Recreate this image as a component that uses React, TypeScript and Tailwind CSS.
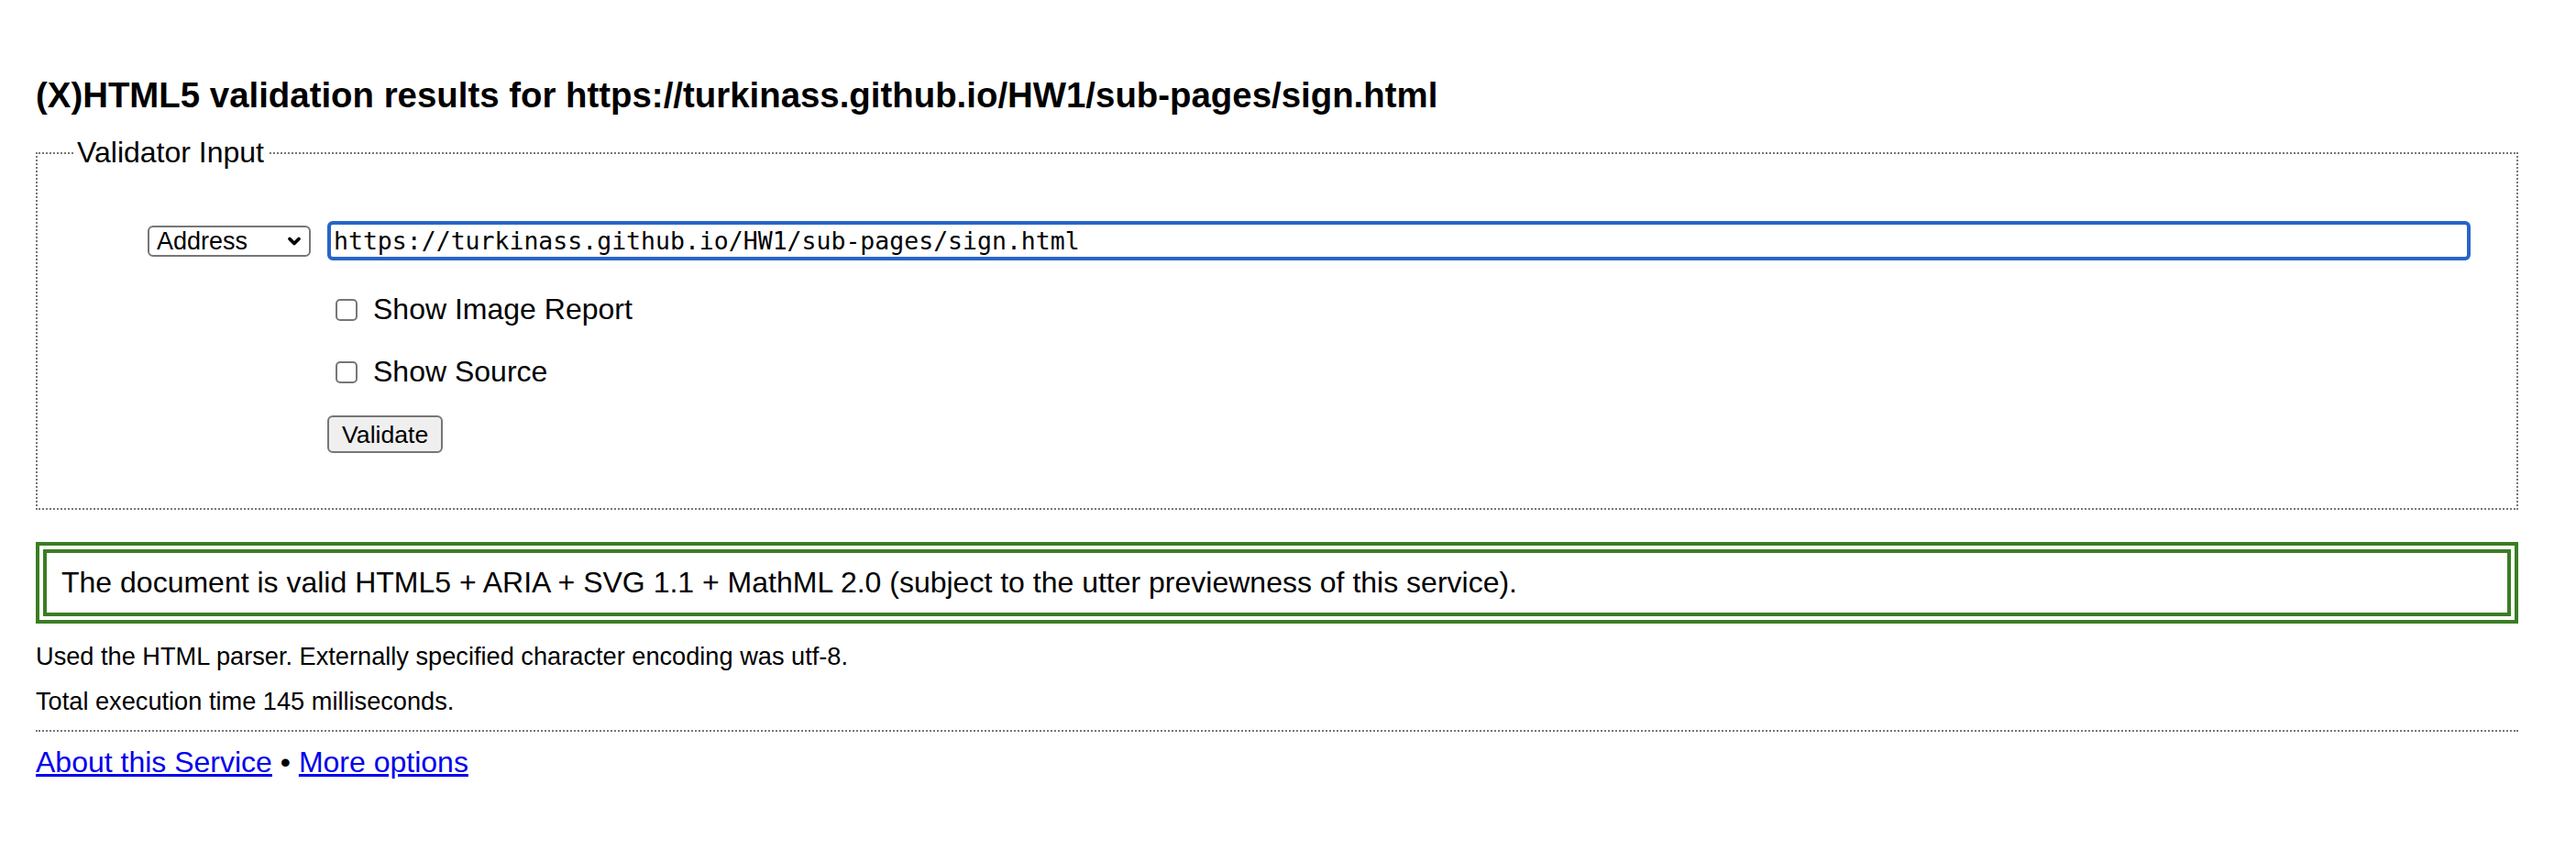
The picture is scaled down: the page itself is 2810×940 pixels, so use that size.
import { ChevronDown } from 'lucide-react';

const sans = "font-['Liberation_Sans',Arial,Helvetica,sans-serif]";

function Checkbox({ label }: { label: string }) {
  return (
    <label className="flex items-center h-[37px] ml-[9px] gap-[17px] text-[32px] leading-[37px]">
      <input
        type="checkbox"
        className="appearance-none w-[24px] h-[24px] border-2 border-[#767676] rounded-[5px] bg-white m-0"
      />
      {label}
    </label>
  );
}

export default function App() {
  return (
    <div className={`${sans} text-black bg-white min-h-[940px] pt-[82px] pl-[39px] pr-[63px]`}>
      <h2 className="text-[38.4px] leading-[44px] font-bold">
        (X)HTML5 validation results for https://turkinass.github.io/HW1/sub-pages/sign.html
      </h2>

      <fieldset className="mt-[22px] border-2 border-dotted border-[#777] pl-[39px] pr-[50px] pb-[60px]">
        <legend className="px-[4px] text-[32px] leading-[37px]">Validator Input</legend>

        <div className="mt-[56px] flex items-center">
          <div className="relative ml-[81px] w-[178px] h-[34px] mr-[18px]">
            <select
              defaultValue="url"
              className="appearance-none w-full h-full border-2 border-[#767676] rounded-[6px] bg-white pl-[8px] text-[27px] leading-[30px] text-black"
            >
              <option value="url">Address</option>
              <option value="file">File Upload</option>
              <option value="text">Text Input</option>
            </select>
            <ChevronDown
              className="pointer-events-none absolute right-[8px] top-[7px] w-[20px] h-[20px] text-black"
              strokeWidth={4.5}
            />
          </div>
          <input
            type="text"
            readOnly
            value="https://turkinass.github.io/HW1/sub-pages/sign.html"
            className="flex-1 h-[43px] border-[4px] border-[#2865c9] rounded-[6px] px-[3px] font-['DejaVu_Sans_Mono',monospace] text-[26.5px] text-black outline-none"
          />
        </div>

        <div className="ml-[277px] flex flex-col">
          <div className="mt-[35px]">
            <Checkbox label="Show Image Report" />
          </div>
          <div className="mt-[31px]">
            <Checkbox label="Show Source" />
          </div>
          <div className="mt-[29px]">
            <button className="h-[41px] px-[14px] bg-[#efefef] border-2 border-[#767676] rounded-[6px] text-[26.67px] leading-[30px] text-black">
              Validate
            </button>
          </div>
        </div>
      </fieldset>

      <div className="mt-[35px] border-[12px] border-double border-[#3a7d22] px-[16px] py-[14px]">
        <p className="text-[32px] leading-[37px]">
          The document is valid HTML5 + ARIA + SVG 1.1 + MathML 2.0 (subject to the utter previewness of this service).
        </p>
      </div>

      <p className="mt-[20px] text-[27.2px] leading-[31px]">
        Used the HTML parser. Externally specified character encoding was utf-8.
      </p>
      <p className="mt-[18px] text-[27.2px] leading-[31px]">Total execution time 145 milliseconds.</p>

      <hr className="mt-[16px] border-0 border-t-2 border-dotted border-[#777]" />

      <p className="mt-[15px] text-[32px] leading-[37px]">
        <a href="#" className="text-[#0000ee] underline">About this Service</a>
        {' • '}
        <a href="#" className="text-[#0000ee] underline">More options</a>
      </p>
    </div>
  );
}
